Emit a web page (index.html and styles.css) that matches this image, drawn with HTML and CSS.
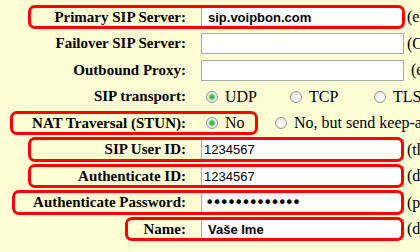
FILE: index.html
```html
<!DOCTYPE html>
<html lang="en">
<head>
    <meta charset="UTF-8">
    <title>SIP Account</title>
    <link rel="stylesheet" href="styles.css">
</head>
<body>
    <form class="sip-form">
        <div class="row">
            <label class="label">Primary SIP Server:</label>
            <input class="field field-bold" type="text" value="sip.voipbon.com">
            <span class="hint">(e.g. sip.provider.com)</span>
            <span class="mark mark-primary"></span>
        </div>
        <div class="row">
            <label class="label">Failover SIP Server:</label>
            <input class="field" type="text">
            <span class="hint">(Optional)</span>
        </div>
        <div class="row">
            <label class="label">Outbound Proxy:</label>
            <input class="field" type="text">
            <span class="hint hint-far">(e.g. proxy.provider.com)</span>
        </div>
        <div class="row">
            <label class="label">SIP transport:</label>
            <div class="choices">
                <label class="choice choice-transport"><input type="radio" name="transport" class="radio" checked> UDP</label>
                <label class="choice choice-transport"><input type="radio" name="transport" class="radio"> TCP</label>
                <label class="choice"><input type="radio" name="transport" class="radio"> TLS</label>
            </div>
        </div>
        <div class="row">
            <label class="label">NAT Traversal (STUN):</label>
            <div class="choices">
                <label class="choice choice-no"><input type="radio" name="nat" class="radio" checked> No</label>
                <label class="choice"><input type="radio" name="nat" class="radio"> No, but send keep-alive</label>
            </div>
            <span class="mark mark-nat"></span>
        </div>
        <div class="row">
            <label class="label">SIP User ID:</label>
            <input class="field" type="text" value="1234567">
            <span class="hint">(the user part of SIP URI)</span>
            <span class="mark mark-user"></span>
        </div>
        <div class="row">
            <label class="label">Authenticate ID:</label>
            <input class="field" type="text" value="1234567">
            <span class="hint">(defaults to SIP User ID)</span>
            <span class="mark mark-user"></span>
        </div>
        <div class="row">
            <label class="label">Authenticate Password:</label>
            <input class="field field-pass" type="password" value="aaaaaaaaaaaaa">
            <span class="hint">(password)</span>
            <span class="mark mark-pass"></span>
        </div>
        <div class="row">
            <label class="label">Name:</label>
            <input class="field field-bold" type="text" value="Vaše Ime">
            <span class="hint">(display name)</span>
            <span class="mark mark-name"></span>
        </div>
    </form>
</body>
</html>
```

FILE: styles.css
```css
body {
    margin: 0;
    background-color: #fffdd4;
    overflow: hidden;
    font-family: "Liberation Serif", serif;
    color: #000;
}

.sip-form {
    padding-top: 3.75px;
}

.row {
    position: relative;
    display: flex;
    align-items: center;
    height: 26.5px;
    white-space: nowrap;
}

.label {
    flex: none;
    width: 186px;
    margin-right: 15px;
    text-align: right;
    font-size: 15px;
    font-weight: bold;
}

.field {
    flex: none;
    box-sizing: border-box;
    width: 203px;
    height: 21px;
    margin: 0;
    padding: 0 2px;
    border: 1px solid #a5acb2;
    background: #fff;
    font-family: "Liberation Sans", Arial, sans-serif;
    font-size: 13px;
    color: #000;
    outline: none;
}

.field-bold {
    padding-left: 6px;
    font-weight: bold;
}

.field-pass {
    padding-left: 3px;
    font-family: "DejaVu Sans", sans-serif;
    font-size: 16px;
    letter-spacing: -2.2px;
}

.hint {
    margin-left: 3px;
    font-size: 16px;
}

.hint-far {
    margin-left: 7px;
}

.choices {
    display: flex;
    align-items: center;
    padding-left: 5px;
}

.choice {
    display: inline-flex;
    align-items: center;
    gap: 7px;
    font-size: 16px;
}

.choice-transport {
    width: 84px;
}

.choice-no {
    width: 69px;
}

.radio {
    appearance: none;
    -webkit-appearance: none;
    flex: none;
    width: 12px;
    height: 12px;
    margin: 0;
    border: 1px solid #8d9aa6;
    border-radius: 50%;
    background: radial-gradient(circle at 60% 60%, #fff 0, #eceae0 70%, #d8d6cc 100%);
}

.radio:checked {
    background: radial-gradient(circle, #2faa3c 0, #4dc45a 2px, #a8dcae 3px, #f2f1ea 4px, #dedcd2 100%);
}

.mark {
    position: absolute;
    top: 1px;
    bottom: 1px;
    border: 3px solid #f00;
    border-radius: 7px;
    pointer-events: none;
}

.mark-primary {
    left: 28px;
    right: 15px;
}

.mark-nat {
    left: 10px;
    right: 162px;
}

.mark-user {
    left: 28px;
    right: 16px;
}

.mark-pass {
    left: 12px;
    right: 16px;
}

.mark-name {
    left: 125px;
    right: 16px;
}
```
